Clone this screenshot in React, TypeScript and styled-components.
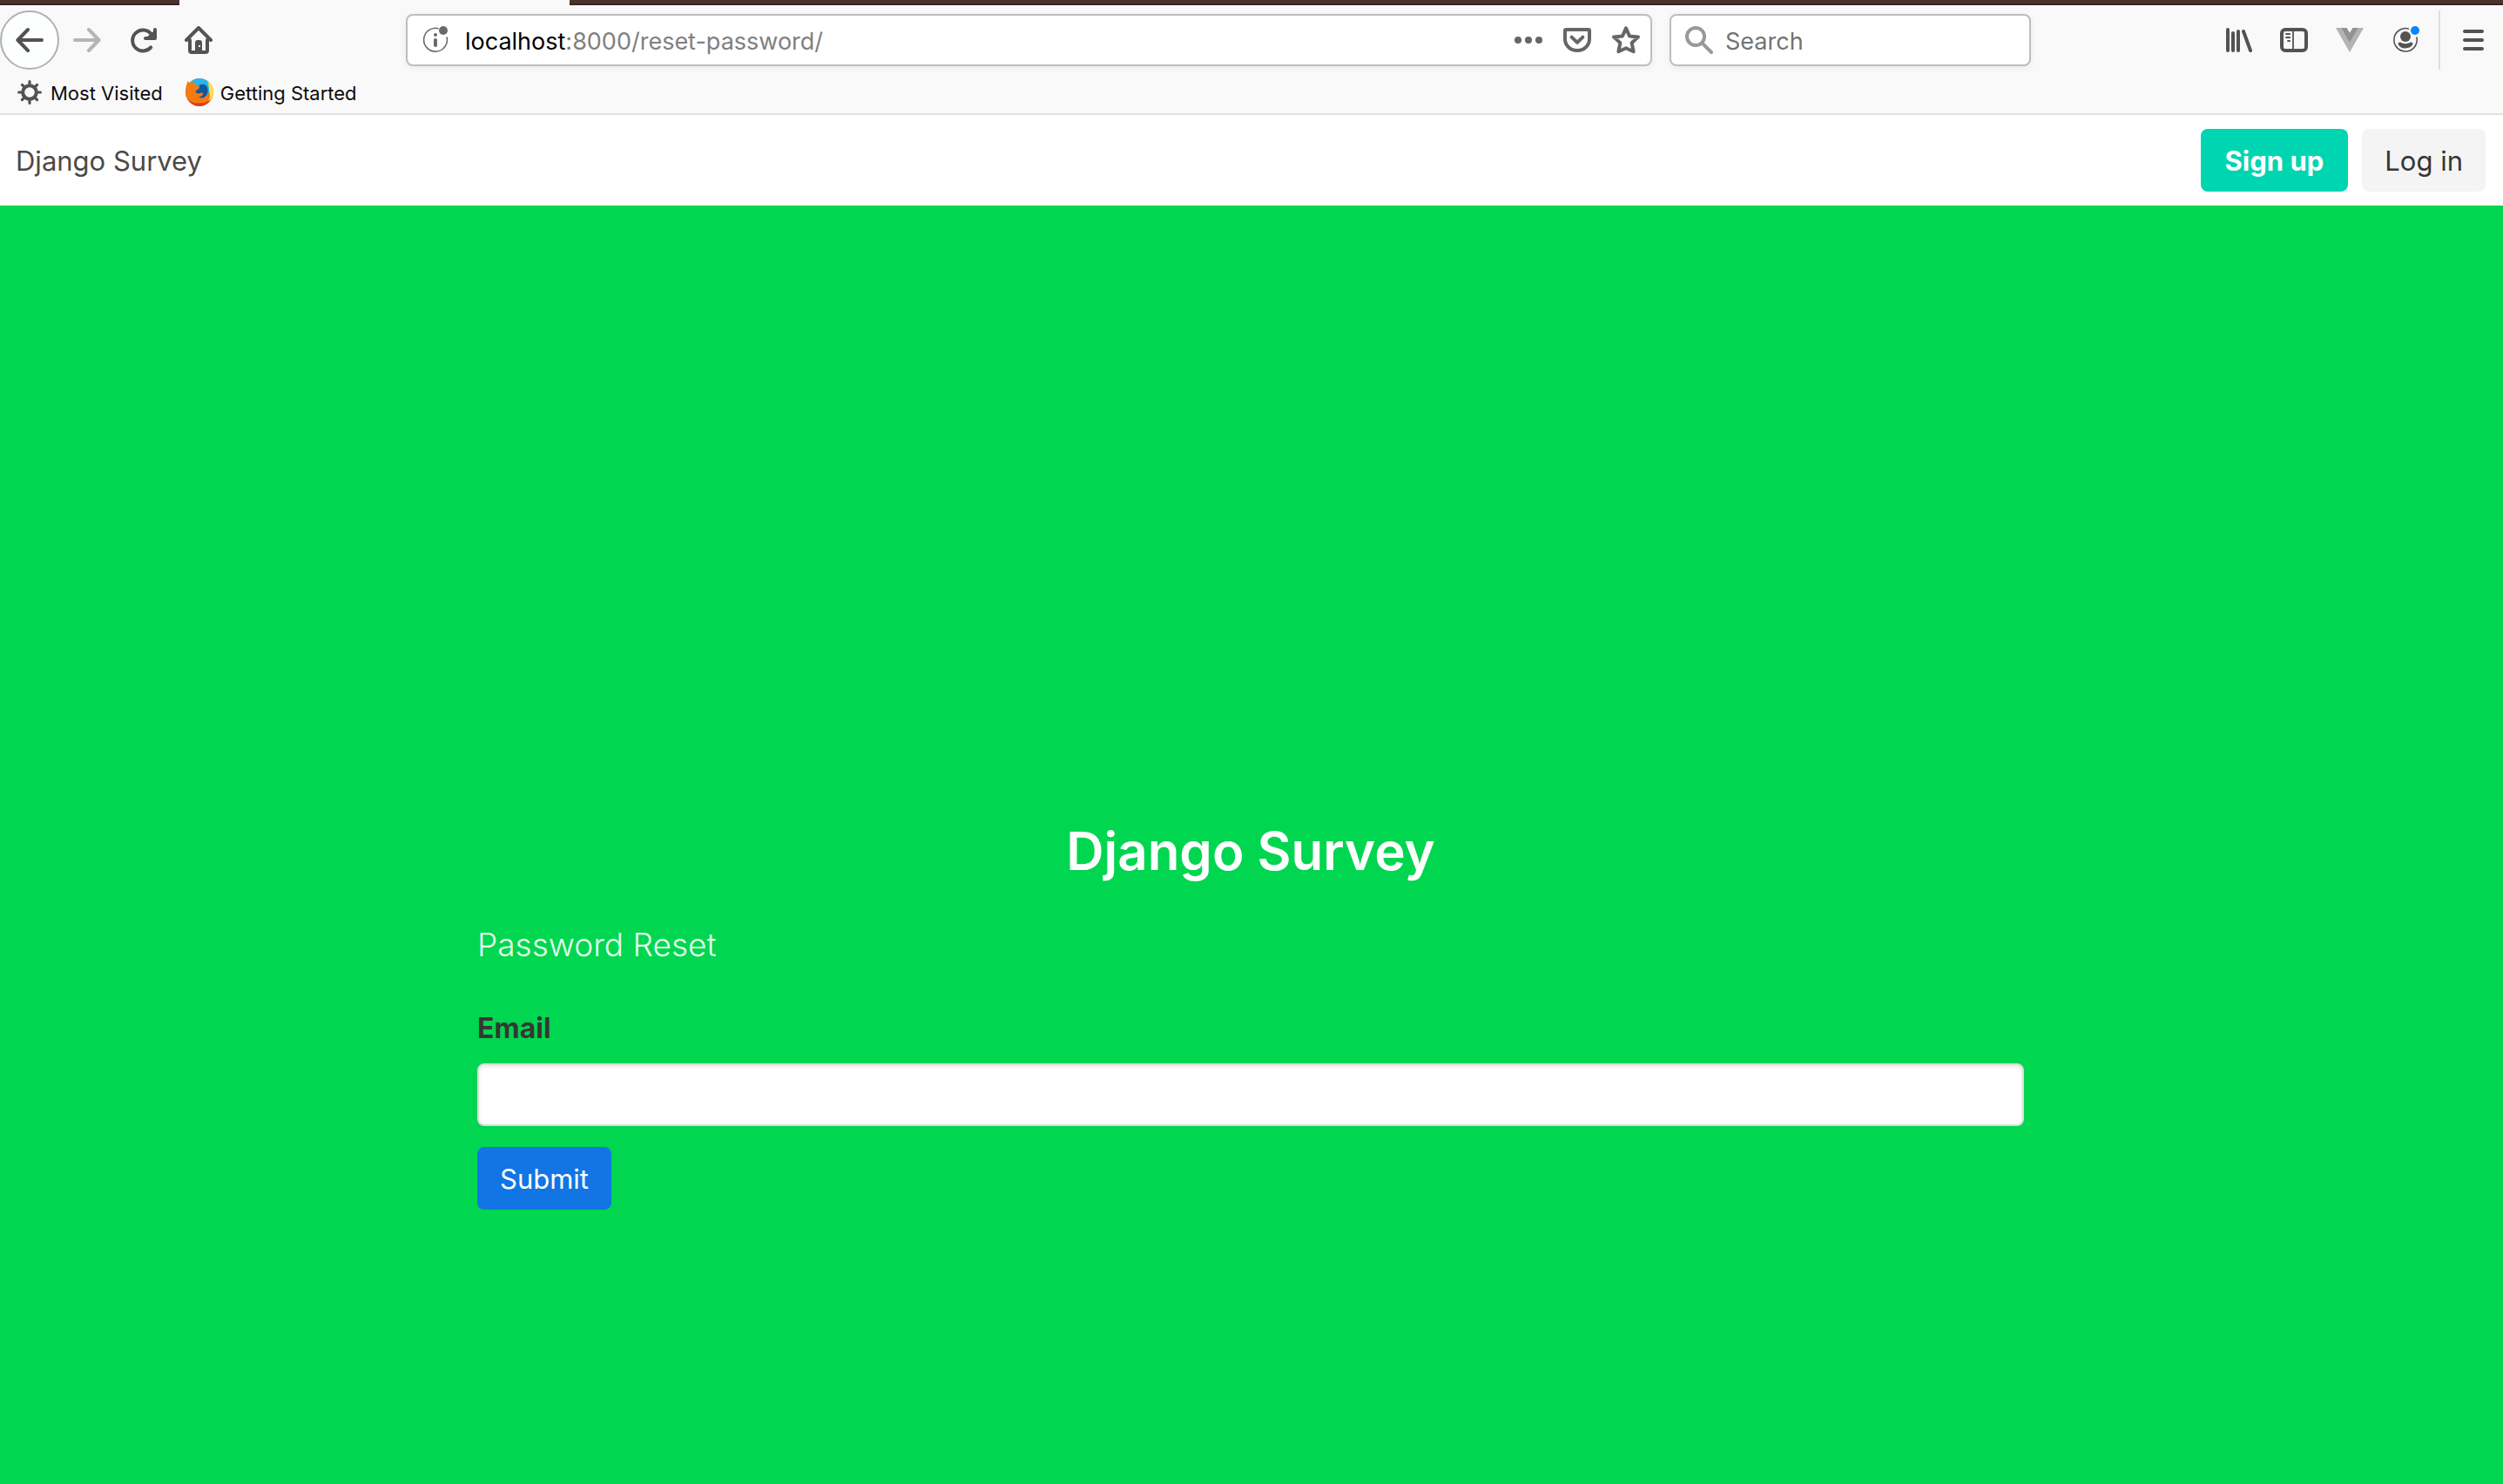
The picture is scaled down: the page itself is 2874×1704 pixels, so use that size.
import React from "react";
import styled, { createGlobalStyle } from "styled-components";

const Global = createGlobalStyle`
  *, *::before, *::after { box-sizing: border-box; }
  body { margin: 0; font-family: Inter, "Liberation Sans", sans-serif; color: #4a4a4a; background: #fff; }
  button, input { font: inherit; }
  a { text-decoration: none; color: inherit; }
`;

const Window = styled.div`
  display: flex;
  flex-direction: column;
  min-height: 100vh;
`;

const TabStrip = styled.div`
  display: flex;
  height: 6px;
  background: #f9f9fa;
`;

const StripPart = styled.div<{ $grow?: boolean; $width?: number }>`
  flex: ${p => (p.$grow ? "1" : `0 0 ${p.$width}px`)};
  background: #4b332e;
  border-bottom: 2px solid #3a2522;
`;

const ActiveTab = styled.div`
  flex: 0 0 448px;
`;

const Chrome = styled.header`
  background: #f9f9f9;
  border-bottom: 2px solid #e0e0e0;
`;

const Toolbar = styled.div`
  display: flex;
  align-items: center;
  height: 80px;
  padding-right: 2px;
`;

const ToolButton = styled.button<{ $width?: number; $dim?: boolean; $tint?: string }>`
  display: flex;
  flex: none;
  align-items: center;
  justify-content: center;
  width: ${p => p.$width ?? 64}px;
  height: 64px;
  padding: 0;
  border: 0;
  background: none;
  color: ${p => (p.$dim ? "#b5b5b5" : p.$tint ?? "#535354")};
`;

const BackButton = styled(ToolButton)`
  width: 68px;
  height: 68px;
  border: 2px solid #b1b1b1;
  border-radius: 50%;
  background: #fdfffe;
`;

const Field = styled.div<{ $width?: number }>`
  display: flex;
  align-items: center;
  min-width: 0;
  height: 60px;
  flex: ${p => (p.$width ? `0 1 ${p.$width}px` : "1 1 0")};
  border: 2px solid #bebebe;
  border-radius: 8px;
  background: #fff;
  box-shadow: 0 2px 8px rgba(0, 0, 0, 0.06);
  color: #6a6a6a;
`;

const AddressField = styled(Field)`
  margin-left: 206px;
  margin-right: 20px;
  padding-left: 16px;
`;

const SearchField = styled(Field)`
  padding-left: 16px;
  gap: 14px;
  color: #999;
`;

const Address = styled.a`
  flex: 1;
  margin-left: 18px;
  padding-top: 3px;
  font-size: 27px;
  line-height: 36px;
  color: #808080;
`;

const Host = styled.span`
  color: #000;
`;

const SearchInput = styled.input`
  flex: 1;
  min-width: 0;
  padding: 3px 0 0;
  border: 0;
  outline: 0;
  background: none;
  font-size: 27px;
  line-height: 36px;
  &::placeholder { color: #737373; opacity: 1; }
`;

const Actions = styled.div`
  display: flex;
  align-items: center;
  margin-left: 206px;
`;

const Divider = styled.span`
  width: 2px;
  height: 68px;
  margin: 0 6px;
  background: #dfdfdf;
`;

const Bookmarks = styled.nav`
  display: flex;
  align-items: center;
  gap: 26px;
  height: 44px;
  padding: 0 18px 4px;
`;

const Bookmark = styled.a`
  display: flex;
  align-items: center;
  gap: 8px;
  color: #535354;
`;

const BookmarkName = styled.span`
  padding-top: 2px;
  font-size: 22px;
  line-height: 28px;
  color: #0c0c0c;
`;

const Navbar = styled.nav`
  display: flex;
  align-items: center;
  justify-content: space-between;
  height: 104px;
  padding: 0 20px 0 18px;
  background: #fff;
`;

const Brand = styled.a`
  padding-top: 2px;
  font-size: 31px;
  line-height: 48px;
`;

const Buttons = styled.div`
  display: flex;
  gap: 16px;
`;

const Button = styled.button<{ $tone: "primary" | "light" | "link" }>`
  height: 72px;
  padding: 2px ${p => (p.$tone === "primary" ? 28 : 26)}px 0;
  border: 0;
  border-radius: 8px;
  font-size: 31px;
  line-height: 48px;
  font-weight: ${p => (p.$tone === "primary" ? 700 : 400)};
  color: ${p => (p.$tone === "light" ? "#363636" : "#fff")};
  background: ${p => ({ primary: "#00d5b2", light: "#f4f4f4", link: "#1275e4" })[p.$tone]};
`;

const Hero = styled.main`
  display: flex;
  flex: 1;
  align-items: center;
  justify-content: center;
  padding: 390px 50px 0 48px;
  background: #00d64f;
`;

const Panel = styled.form`
  display: flex;
  flex-direction: column;
  align-items: flex-start;
  width: 100%;
  max-width: 1776px;
`;

const Title = styled.h1`
  align-self: center;
  margin: 0 0 48px;
  font-size: 60px;
  line-height: 72px;
  font-weight: 600;
  color: #fff;
`;

const Subtitle = styled.p`
  margin: 0 0 48px;
  font-size: 37px;
  line-height: 48px;
  font-weight: 300;
  color: #e6fcee;
`;

const Label = styled.label`
  margin-bottom: 16px;
  font-size: 32px;
  line-height: 48px;
  font-weight: 700;
  color: #363636;
`;

const TextInput = styled.input`
  width: 100%;
  height: 72px;
  margin-bottom: 24px;
  padding: 0 20px;
  border: 2px solid #dbdbdb;
  border-radius: 8px;
  background: #fff;
  box-shadow: inset 0 2px 4px rgba(10, 10, 10, 0.1);
  font-size: 32px;
  color: #363636;
`;

type IconProps = { children: React.ReactNode; size?: number };

/* Drawn on a 16-unit grid. */
const Icon = ({ children, size = 32 }: IconProps) => (
  <svg width={size} height={size} viewBox="0 0 16 16" fill="none" stroke="currentColor" strokeWidth="2" strokeLinecap="round" strokeLinejoin="round" aria-hidden="true">
    {children}
  </svg>
);

const ArrowLeft = () => <Icon><path d="M15 8H1.400M7 2L1.200 8L7 14" /></Icon>;
const ArrowRight = () => <Icon><path d="M1 8h13.600M9 2l5.800 6L9 14" /></Icon>;
const Reload = () => (
  <Icon><path d="M12.600 12.200A6 6 0 1 1 12.600 4.300L14 6" /><path d="M15 2v5H9.500M15 3.500L11 7" /></Icon>
);
const Home = () => (
  <Icon>
    <path d="M1 8L8 1l7 7M3 8v6q0 1 1 1h8q1 0 1-1V8" />
    <path d="M6 15v-5.500q0-1.500 1.500-1.500h1q1.500 0 1.500 1.500V15z" fill="currentColor" stroke="none" />
    <rect x="8" y="11" width="1" height="1" fill="#f9f9f9" stroke="none" />
  </Icon>
);
const Info = () => (
  <Icon>
    <path d="M9.800 1.400A6.700 6.700 0 1 0 14.500 6.200" strokeWidth=".8" strokeLinecap="butt" />
    <circle cx="12.500" cy="2.500" r="2.500" fill="currentColor" stroke="none" />
    <path d="M8 8v3" /><circle cx="8" cy="5" r="1" fill="currentColor" stroke="none" />
  </Icon>
);
const Dots = () => (
  <Icon><g fill="currentColor" stroke="none"><circle cx="2" cy="8" r="2" /><circle cx="8" cy="8" r="2" /><circle cx="14" cy="8" r="2" /></g></Icon>
);
const Pocket = () => (
  <Icon><path d="M1 2.500q0-.500.500-.500h13q.500 0 .500.500V7.500a7 6.500 0 0 1-14 0z" /><path d="M4.800 6.300L8 9.400l3.200-3.100" /></Icon>
);
const Star = () => (
  <Icon><path d="M8 1.200l2 4.500 5 .5-3.700 3.400 1 5L8 12.600l-4.300 2 1-5L1 6.200l5-.5z" /></Icon>
);
const Magnifier = () => <Icon><circle cx="6" cy="6" r="5" /><path d="M9.700 9.700L15 15" /></Icon>;
const Library = () => (
  <Icon><path d="M2 2v12M5 4v10M8 3v11M11 3l4 11" /></Icon>
);
const Sidebar = () => (
  <Icon>
    <rect x="1" y="2" width="14" height="12" rx="2" />
    <path d="M7.500 2v12M3.500 4.500h2.100M3.500 6.500h2.100M4.500 8.500h1.100" strokeWidth=".9" />
  </Icon>
);
const VueMark = () => (
  <Icon>
    <path d="M0 1h6.200L8 4l1.800-3H16L8 15z" fill="#b3b3b3" stroke="none" />
    <path d="M3.200 1h3L8 4l1.800-3h3L8 9.400z" fill="#929292" stroke="none" />
  </Icon>
);
const Account = () => (
  <Icon>
    <path d="M10 1.600A6.600 6.600 0 1 0 14.400 6.200" strokeWidth=".8" strokeLinecap="butt" />
    <circle cx="8" cy="6" r="3" fill="currentColor" stroke="none" />
    <path d="M5 9.300Q8 11 11 9.300q1.300-.100 1.300.900Q11 12.600 8 12.700T3.700 10.200q0-1 1.300-.9z" fill="currentColor" stroke="none" />
    <circle cx="13.500" cy="2.500" r="2.500" fill="#0a84ff" stroke="none" />
  </Icon>
);
const Menu = () => <Icon><path d="M3 3h10M3 8h10M3 13h10" /></Icon>;
const Gear = () => (
  <Icon>
    <circle cx="8" cy="8" r="3.900" />
    <path d="M8 1.800v2M8 12.200v2M1.800 8h2M12.200 8h2M3.700 3.700l1.300 1.300M11 11l1.300 1.300M3.700 12.300L5 11M11 5l1.300-1.300" strokeWidth="1.600" />
  </Icon>
);
const Firefox = () => (
  <Icon>
    <g stroke="none">
      <circle cx="8" cy="8" r="8" fill="#f26a0b" />
      <path d="M2.800 2.200Q5 0 8 0t5.500 2.300L14 8l-4 4-5-1-2-5z" fill="#26b7ee" />
      <path d="M7.500 4.500Q9 2.600 11.500 3.800q2 2 1 5T8.500 12L5 9z" fill="#15569a" />
      <path d="M12.600 1.600Q16 4 16 8q0 3.500-3 5.700 1-3 .6-5.700 0-4-1-6.400z" fill="#ffe04a" />
      <path d="M1.300 1.500L2.600 3q1.400-1 2.700-.6L5.500 4l2.500.6q.3 1.200-1.600 2.200L5.600 7.800q1.200 1.400 2.900.6 1.500-.4 1.700.5-1 1.900-3 1.900 3 1.200 5.300-1.300l1.300-1.700q.8 4-1.600 6.200H3Q0 11 0 8q0-3.500 1.300-6.500z" fill="#f47a12" />
      <path d="M1 11.800Q4 14.600 8 14.300q4-.300 6.500-2Q12 16 8 16 3.500 16 1 11.800z" fill="#dd3d22" />
    </g>
  </Icon>
);

export default function App() {
  return (
    <Window>
      <Global />
      <TabStrip>
        <StripPart $width={206} />
        <ActiveTab />
        <StripPart $grow />
      </TabStrip>
      <Chrome>
        <Toolbar>
          <BackButton aria-label="Back"><ArrowLeft /></BackButton>
          <ToolButton $dim aria-label="Forward"><ArrowRight /></ToolButton>
          <ToolButton aria-label="Reload"><Reload /></ToolButton>
          <ToolButton aria-label="Home"><Home /></ToolButton>
          <AddressField>
            <Info />
            <Address href="#"><Host>localhost</Host>:8000/reset-password/</Address>
            <ToolButton $width={56} $tint="#666" aria-label="Page actions"><Dots /></ToolButton>
            <ToolButton $width={56} $tint="#666" aria-label="Save to Pocket"><Pocket /></ToolButton>
            <ToolButton $width={56} $tint="#666" aria-label="Bookmark this page"><Star /></ToolButton>
          </AddressField>
          <SearchField $width={415}>
            <Magnifier />
            <SearchInput aria-label="Search" placeholder="Search" />
          </SearchField>
          <Actions>
            <ToolButton aria-label="Library"><Library /></ToolButton>
            <ToolButton aria-label="Sidebars"><Sidebar /></ToolButton>
            <ToolButton aria-label="Vue devtools"><VueMark /></ToolButton>
            <ToolButton aria-label="Account"><Account /></ToolButton>
            <Divider />
            <ToolButton aria-label="Menu"><Menu /></ToolButton>
          </Actions>
        </Toolbar>
        <Bookmarks>
          <Bookmark href="#"><Gear /><BookmarkName>Most Visited</BookmarkName></Bookmark>
          <Bookmark href="#"><Firefox /><BookmarkName>Getting Started</BookmarkName></Bookmark>
        </Bookmarks>
      </Chrome>
      <Navbar>
        <Brand href="#">Django Survey</Brand>
        <Buttons>
          <Button type="button" $tone="primary">Sign up</Button>
          <Button type="button" $tone="light">Log in</Button>
        </Buttons>
      </Navbar>
      <Hero>
        <Panel onSubmit={e => e.preventDefault()}>
          <Title>Django Survey</Title>
          <Subtitle>Password Reset</Subtitle>
          <Label htmlFor="email">Email</Label>
          <TextInput id="email" type="email" />
          <Button type="submit" $tone="link">Submit</Button>
        </Panel>
      </Hero>
    </Window>
  );
}
